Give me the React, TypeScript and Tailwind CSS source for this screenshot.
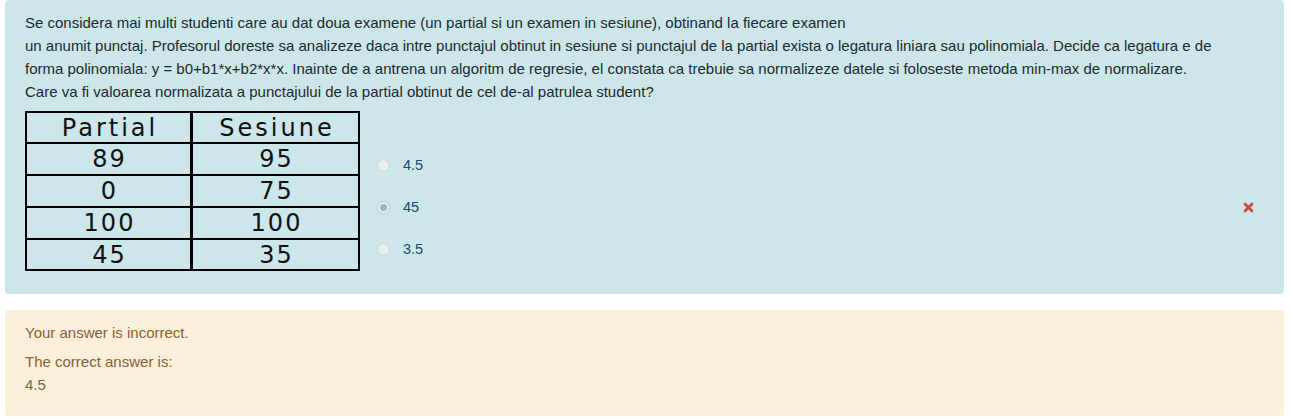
import React from "react";

const rows = [
  ["89", "95"],
  ["0", "75"],
  ["100", "100"],
  ["45", "35"],
];

function Radio({ checked }: { checked?: boolean }) {
  return (
    <span className="flex h-[13px] w-[13px] items-center justify-center rounded-full border border-[#c9d2d5] bg-[#e8eef0]">
      {checked && <span className="h-[7px] w-[7px] rounded-full bg-[#a9b1b4]" />}
    </span>
  );
}

export default function App() {
  const answers = [
    { v: "4.5", c: false },
    { v: "45", c: true },
    { v: "3.5", c: false },
  ];
  return (
    <div className="w-[1293px] bg-white font-['Liberation_Sans',Arial,sans-serif]">
      <div className="ml-[5px] w-[1279px] rounded-[4px] bg-[#cde6ea] pl-[20px] pr-[20px] pt-[11px] pb-[23px] text-[15px] leading-[23px] text-[#1a2a2f]">
        <p>Se considera mai multi studenti care au dat doua examene (un partial si un examen in sesiune), obtinand la fiecare examen</p>
        <p>
          un anumit punctaj. Profesorul doreste sa analizeze daca intre punctajul obtinut in sesiune si punctajul de la partial exista o legatura liniara sau polinomiala. Decide ca legatura e de
          <br />
          forma polinomiala: y = b0+b1*x+b2*x*x. Inainte de a antrena un algoritm de regresie, el constata ca trebuie sa normalizeze datele si foloseste metoda min-max de normalizare.
        </p>
        <p>Care va fi valoarea normalizata a punctajului de la partial obtinut de cel de-al patrulea student?</p>
        <div className="mt-[8px] flex items-start">
          <div className="w-[335px] border-2 border-black font-['DejaVu_Sans',sans-serif] text-[24px] leading-none text-[#111]">
            <div className="grid h-[31px] grid-cols-[166px_1fr] border-b-2 border-black">
              <div className="flex items-center justify-center border-r-[3px] border-black pl-[3px] tracking-[3px]">Partial</div>
              <div className="flex items-center justify-center pl-[3px] tracking-[3px]">Sesiune</div>
            </div>
            {rows.map((r, i) => (
              <div
                key={i}
                className={`grid grid-cols-[166px_1fr] ${i < rows.length - 1 ? "h-[32px] border-b-2 border-black" : "h-[29px]"}`}
              >
                <div className="flex items-center justify-center border-r-[3px] border-black pl-[2px] tracking-[2px]">{r[0]}</div>
                <div className="flex items-center justify-center pl-[2px] tracking-[2px]">{r[1]}</div>
              </div>
            ))}
          </div>
          <div className="ml-[17px] flex flex-1 flex-col pt-[33px]">
            {answers.map((a, i) => (
              <div key={i} className="flex h-[42px] items-center">
                <div className="flex h-[18px] items-center">
                  <Radio checked={a.c} />
                  <span className="ml-[13px] text-[14.5px] text-[#174a66]">{a.v}</span>
                </div>
                {a.c && (
                  <svg className="ml-auto mr-[10px]" width="11" height="11" viewBox="0 0 11 11">
                    <path d="M2 2 L9 9 M9 2 L2 9" stroke="#d0433a" strokeWidth="2.6" strokeLinecap="round" />
                  </svg>
                )}
              </div>
            ))}
          </div>
        </div>
      </div>
      <div className="ml-[5px] mt-[16px] w-[1279px] rounded-[4px] bg-[#fcefdc] pl-[20px] pr-[20px] pt-[11px] pb-[20px] text-[15px] leading-[23px] text-[#8a6230]">
        <p className="mb-[6px]">Your answer is incorrect.</p>
        <p>The correct answer is:</p>
        <p>4.5</p>
      </div>
    </div>
  );
}
